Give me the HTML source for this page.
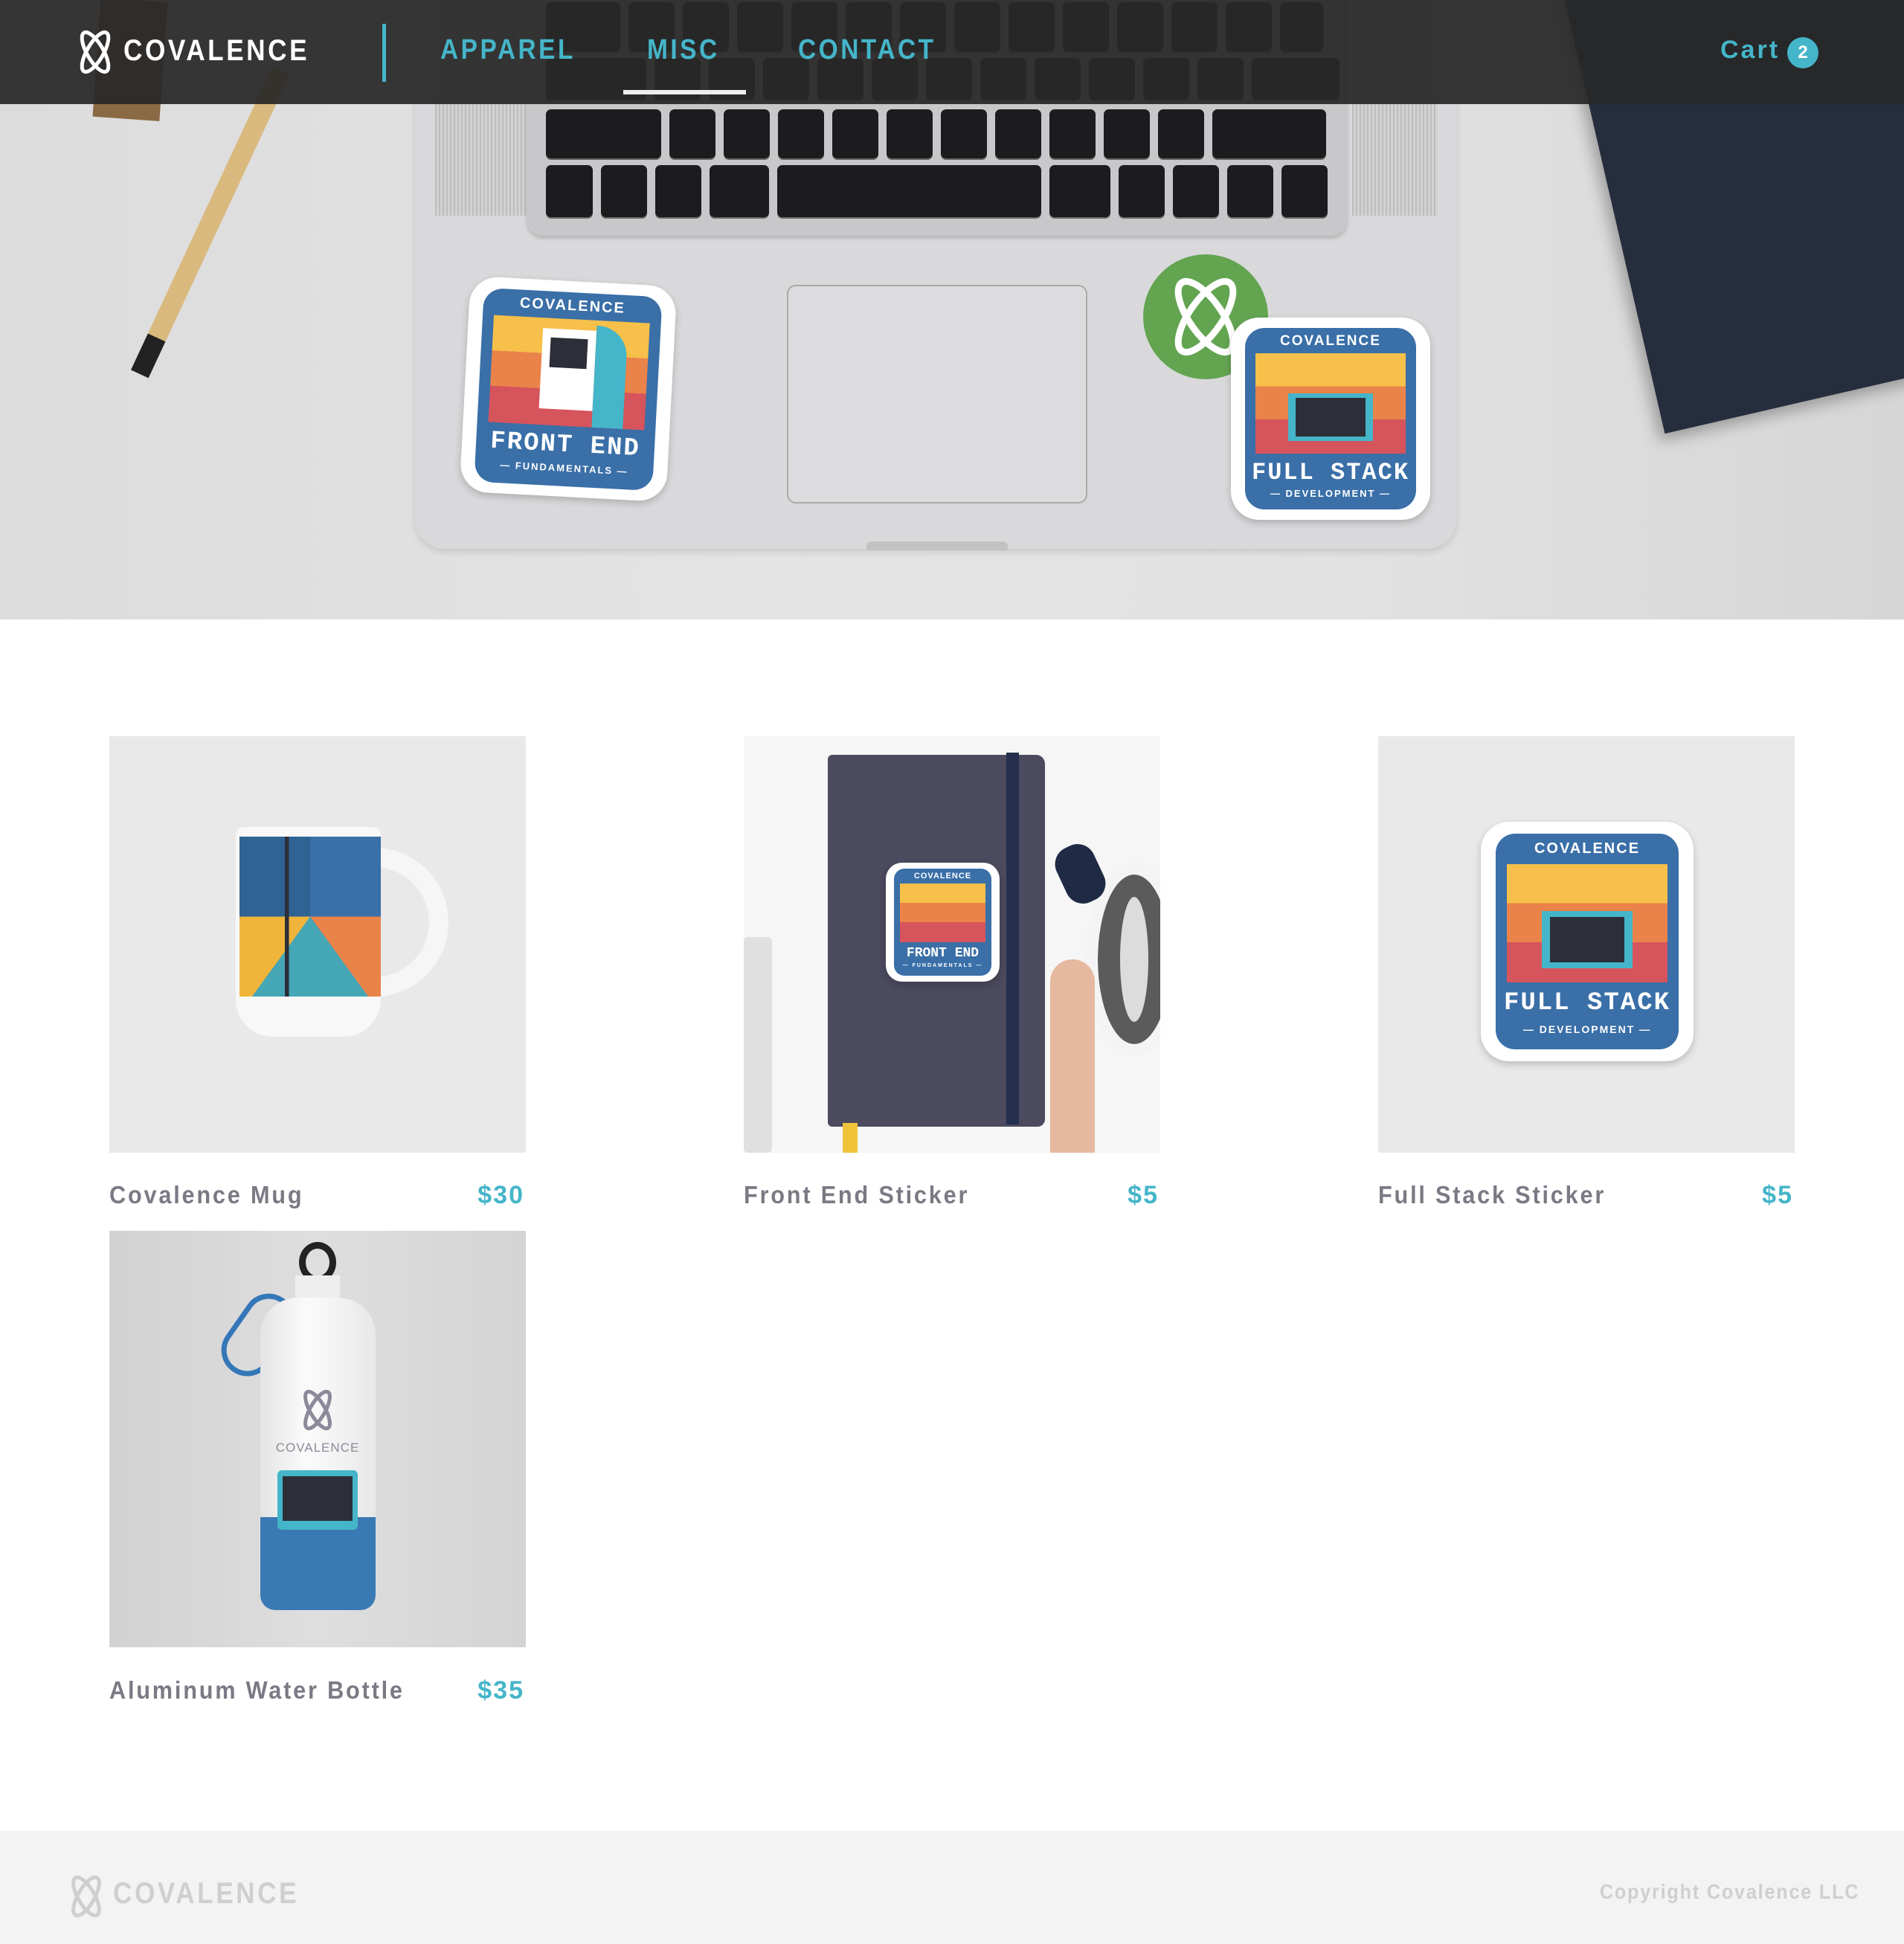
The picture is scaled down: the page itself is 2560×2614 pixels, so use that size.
<!DOCTYPE html>
<html><head><meta charset="utf-8"><style>
*{margin:0;padding:0;box-sizing:border-box}
body{width:2560px;height:2614px;background:#fff;font-family:"Liberation Sans",sans-serif;position:relative;overflow:hidden}
.abs{position:absolute}
.hero{left:0;top:0;width:2560px;height:833px;background:linear-gradient(90deg,#dcdcdc,#e4e4e4 40%,#e2e2e2 70%,#d6d6d6);overflow:hidden}
.key{position:absolute;background:#1c1c1e;border-radius:7px;box-shadow:0 2px 0 #666}
.nav{left:0;top:0;width:2560px;height:140px;background:rgba(40,40,40,.93)}
.nav a{position:absolute;top:46px;font-size:38px;font-weight:bold;letter-spacing:4px;color:#45b5c9;text-decoration:none;transform:scaleX(.88);transform-origin:left}
.stk{position:absolute;background:#fff;border-radius:38px;box-shadow:0 4px 10px rgba(0,0,0,.2)}
.stk .in{position:absolute;left:7%;top:5%;right:7%;bottom:5%;background:#3a6fa8;border-radius:26px;overflow:hidden}
.stk .art{position:absolute;left:6%;right:6%;top:14%;height:55%;background:linear-gradient(#f7c04a 0 33%,#ea834a 33% 66%,#d6545c 66%)}
.stk .t1{position:absolute;top:3%;width:100%;text-align:center;color:#fff;font-weight:bold;letter-spacing:2px}
.stk .t2{position:absolute;top:72%;width:100%;text-align:center;color:#fff;font-weight:bold;font-family:"Liberation Mono",monospace;letter-spacing:2px}
.stk .t3{position:absolute;top:88%;width:100%;text-align:center;color:#fff;font-weight:bold;letter-spacing:2px}
.card{position:absolute;width:560px;height:560px;overflow:hidden}
.lbl{position:absolute;font-size:33px;font-weight:bold;letter-spacing:3px;color:#7a7a85;transform:scaleX(.93);transform-origin:left}
.pr{position:absolute;font-size:34px;font-weight:bold;letter-spacing:2px;color:#45b5c9;text-align:right}
</style></head><body>

<div class="abs hero">
  <div class="abs" style="left:130px;top:0;width:90px;height:160px;background:#8a6a45;transform:rotate(4deg)"></div>
  <div class="abs" style="left:365px;top:95px;width:26px;height:450px;background:linear-gradient(#d9b97e 0 88%,#222 88%);transform:rotate(25deg);transform-origin:top"></div>
  <div class="abs" style="left:2090px;top:-60px;width:700px;height:660px;background:#262d3d;transform:rotate(-13deg);transform-origin:left top;box-shadow:-8px 8px 20px rgba(0,0,0,.3)"></div>
  <div class="abs" style="left:558px;top:-40px;width:1400px;height:778px;background:#d9d9db;border-radius:0 0 40px 40px;box-shadow:0 4px 10px rgba(0,0,0,.12)"></div>
  <div class="abs" style="left:585px;top:0;width:125px;height:290px;background:repeating-linear-gradient(90deg,#bdbdbd 0 2px,#d2d2d2 2px 5px)"></div>
  <div class="abs" style="left:1818px;top:0;width:115px;height:290px;background:repeating-linear-gradient(90deg,#bdbdbd 0 2px,#d2d2d2 2px 5px)"></div>
  <div class="abs" style="left:708px;top:0;width:1104px;height:317px;background:#c8c8ca;border-radius:0 0 22px 22px;box-shadow:0 4px 4px rgba(0,0,0,.15)"></div>
  <div id="keys"></div>
  <div class="abs" style="left:1058px;top:383px;width:404px;height:294px;background:#dcdcde;border:2px solid #aaa;border-radius:12px"></div>
  <div class="abs" style="left:1165px;top:728px;width:190px;height:12px;background:#c2c2c2;border-radius:6px 6px 0 0"></div>

  <div class="stk" style="left:625px;top:378px;width:278px;height:290px;transform:rotate(3deg)">
    <div class="in"><div class="t1" style="font-size:20px">COVALENCE</div><div class="art">
      <div class="abs" style="left:32%;top:10%;width:34%;height:75%;background:#fff"></div>
      <div class="abs" style="left:37%;top:18%;width:24%;height:28%;background:#2c2f38"></div>
      <div class="abs" style="left:66%;top:5%;width:20%;height:95%;background:#45b5c9;border-radius:0 40px 0 0"></div></div>
      <div class="t2" style="font-size:34px">FRONT END</div><div class="t3" style="font-size:13px">— FUNDAMENTALS —</div></div>
  </div>
  <div class="abs" style="left:1537px;top:342px;width:168px;height:168px;border-radius:50%;background:#63a451">
    <svg width="168" height="168" viewBox="0 0 168 168"><g fill="none" stroke="#fff" stroke-width="9"><ellipse cx="84" cy="84" rx="22" ry="56" transform="rotate(35 84 84)"/><ellipse cx="84" cy="84" rx="22" ry="56" transform="rotate(-35 84 84)"/></g></svg>
  </div>
  <div class="stk" style="left:1655px;top:427px;width:268px;height:272px">
    <div class="in"><div class="t1" style="font-size:19px">COVALENCE</div><div class="art">
      <div class="abs" style="left:22%;top:40%;width:56%;height:48%;background:#45b5c9"></div>
      <div class="abs" style="left:27%;top:45%;width:46%;height:38%;background:#2c2f38"></div></div>
      <div class="t2" style="font-size:32px">FULL STACK</div><div class="t3" style="font-size:13px">— DEVELOPMENT —</div></div>
  </div>
</div>

<div class="abs nav">
  <svg class="abs" style="left:97px;top:38px" width="62" height="64" viewBox="0 0 62 64"><g fill="none" stroke="#fff" stroke-width="5"><ellipse cx="31" cy="32" rx="11" ry="30" transform="rotate(30 31 32)"/><ellipse cx="31" cy="32" rx="11" ry="30" transform="rotate(-30 31 32)"/></g></svg>
  <div class="abs" style="left:166px;top:46px;font-size:40px;color:#fff;letter-spacing:4px;font-weight:bold;transform:scaleX(.88);transform-origin:left">COVALENCE</div>
  <div class="abs" style="left:514px;top:32px;width:5px;height:78px;background:#45b5c9"></div>
  <a style="left:592px">APPAREL</a>
  <a style="left:870px">MISC</a>
  <a style="left:1073px">CONTACT</a>
  <div class="abs" style="left:838px;top:121px;width:165px;height:6px;background:#eee"></div>
  <div class="abs" style="left:2313px;top:48px;font-size:34px;font-weight:bold;letter-spacing:3px;color:#45b5c9">Cart</div>
  <div class="abs" style="left:2403px;top:50px;width:42px;height:42px;border-radius:50%;background:#45b5c9;color:#fff;font-size:24px;font-weight:bold;text-align:center;line-height:42px">2</div>
</div>

<div class="card" style="left:147px;top:990px;background:#e9e9e9">
  <div class="abs" style="left:336px;top:150px;width:120px;height:200px;border:26px solid #f6f6f6;border-left:none;border-radius:0 100px 100px 0"></div>
  <div class="abs" style="left:170px;top:122px;width:195px;height:282px;background:#f8f8f8;border-radius:10px 10px 50px 50px"></div>
  <div class="abs" style="left:175px;top:135px;width:190px;height:215px;background:
   linear-gradient(90deg,transparent 32%,#2c2f38 32% 35%,transparent 35%),
   conic-gradient(from 0deg at 50% 50%,#3a6fa8 0 25%,#e9834a 25% 40%,#45a6b5 40% 60%,#f0b43a 60% 75%,#2e6394 75%)"></div>
</div>
<div class="card" style="left:1000px;top:990px;background:#f6f6f6">
  <div class="abs" style="left:0;top:270px;width:38px;height:290px;background:#e0e0e0;border-radius:6px"></div>
  <div class="abs" style="left:113px;top:25px;width:292px;height:500px;background:#4b4a5e;border-radius:6px 12px 10px 6px"></div>
  <div class="abs" style="left:353px;top:22px;width:17px;height:500px;background:#25304f"></div>
  <div class="abs" style="left:133px;top:520px;width:20px;height:40px;background:#f0c43a"></div>
  <div class="abs" style="left:460px;top:170px;width:130px;height:260px;border-radius:50%;background:#dcdcdc;border:16px solid #f4f4f4;box-shadow:inset 0 0 0 30px #5b5b5b"></div>
  <div class="abs" style="left:425px;top:145px;width:55px;height:80px;border-radius:24px;background:#1f2a44;transform:rotate(-25deg)"></div>
  <div class="abs" style="left:412px;top:300px;width:60px;height:260px;background:#e6b8a0;border-radius:30px 30px 0 0"></div>
  <div class="stk" style="left:191px;top:170px;width:153px;height:160px;border-radius:22px">
    <div class="in" style="border-radius:14px"><div class="t1" style="font-size:11px;letter-spacing:1px">COVALENCE</div><div class="art"></div><div class="t2" style="font-size:18px;letter-spacing:0">FRONT END</div><div class="t3" style="font-size:7px">— FUNDAMENTALS —</div></div>
  </div>
</div>
<div class="card" style="left:1853px;top:990px;background:#e9e9ea">
  <div class="stk" style="left:138px;top:115px;width:286px;height:322px">
    <div class="in"><div class="t1" style="font-size:20px">COVALENCE</div><div class="art">
      <div class="abs" style="left:22%;top:40%;width:56%;height:48%;background:#45b5c9"></div>
      <div class="abs" style="left:27%;top:45%;width:46%;height:38%;background:#2c2f38"></div></div>
      <div class="t2" style="font-size:34px">FULL STACK</div><div class="t3" style="font-size:14px">— DEVELOPMENT —</div></div>
  </div>
</div>
<div class="lbl" style="left:147px;top:1588px">Covalence Mug</div>
<div class="pr" style="left:500px;top:1588px;width:205px">$30</div>
<div class="lbl" style="left:1000px;top:1588px">Front End Sticker</div>
<div class="pr" style="left:1353px;top:1588px;width:205px">$5</div>
<div class="lbl" style="left:1853px;top:1588px">Full Stack Sticker</div>
<div class="pr" style="left:2206px;top:1588px;width:205px">$5</div>

<div class="card" style="left:147px;top:1655px;background:linear-gradient(90deg,#d2d2d2,#dedede 50%,#d4d4d4)">
  <div class="abs" style="left:255px;top:15px;width:50px;height:55px;border:9px solid #222;border-radius:50%"></div>
  <div class="abs" style="left:250px;top:60px;width:60px;height:60px;background:#eee"></div>
  <div class="abs" style="left:165px;top:80px;width:70px;height:120px;border:7px solid #3477b8;border-radius:40px;transform:rotate(35deg)"></div>
  <div class="abs" style="left:203px;top:90px;width:155px;height:420px;background:linear-gradient(90deg,#e4e4e4,#fbfbfb 40%,#e8e8e8);border-radius:50px 50px 20px 20px"></div>
  <div class="abs" style="left:203px;top:385px;width:155px;height:125px;background:#3a7ab4;border-radius:0 0 20px 20px"></div>
  <div class="abs" style="left:226px;top:322px;width:108px;height:80px;background:#45b5c9;border-radius:6px"></div>
  <div class="abs" style="left:233px;top:330px;width:94px;height:60px;background:#2c2f38"></div>
  <div class="abs" style="left:0;top:282px;width:560px;text-align:center;font-size:17px;color:#8a8a9a;letter-spacing:1px">COVALENCE</div>
  <svg class="abs" style="left:252px;top:210px" width="56" height="62" viewBox="0 0 56 62"><g fill="none" stroke="#8a8a9a" stroke-width="5"><ellipse cx="28" cy="31" rx="10" ry="28" transform="rotate(30 28 31)"/><ellipse cx="28" cy="31" rx="10" ry="28" transform="rotate(-30 28 31)"/></g></svg>
</div>
<div class="lbl" style="left:147px;top:2254px">Aluminum Water Bottle</div>
<div class="pr" style="left:500px;top:2254px;width:205px">$35</div>

<div class="abs" style="left:0;top:2462px;width:2560px;height:152px;background:#f3f3f3">
  <svg class="abs" style="left:86px;top:56px" width="60" height="64" viewBox="0 0 60 64"><g fill="none" stroke="#cfcfd2" stroke-width="5"><ellipse cx="30" cy="32" rx="11" ry="29" transform="rotate(30 30 32)"/><ellipse cx="30" cy="32" rx="11" ry="29" transform="rotate(-30 30 32)"/></g></svg>
  <div class="abs" style="left:152px;top:62px;font-size:40px;color:#cfcfd2;letter-spacing:4px;font-weight:bold;transform:scaleX(.88);transform-origin:left">COVALENCE</div>
  <div class="abs" style="right:60px;top:66px;font-size:28px;color:#cfcfd2;letter-spacing:2px;font-weight:bold;transform:scaleX(.9);transform-origin:right">Copyright Covalence LLC</div>
</div>

<script>
(function(){
 var k=document.getElementById('keys'),h='';
 function row(y,hh,ws,x0){var x=x0;ws.forEach(function(w){h+='<div class="key" style="left:'+x+'px;top:'+y+'px;width:'+w+'px;height:'+hh+'px"></div>';x+=w+11;});}
 row(3,66,[100,62,62,62,62,62,62,62,62,62,62,62,62,58],734);
 row(78,56,[135,62,62,62,62,62,62,62,62,62,62,62,118],734);
 row(147,66,[155,62,62,62,62,62,62,62,62,62,62,153],734);
 row(222,70,[63,62,62,80,355,82,62,62,62,62],734);
 k.outerHTML=h;
})();
</script>
</body></html>
